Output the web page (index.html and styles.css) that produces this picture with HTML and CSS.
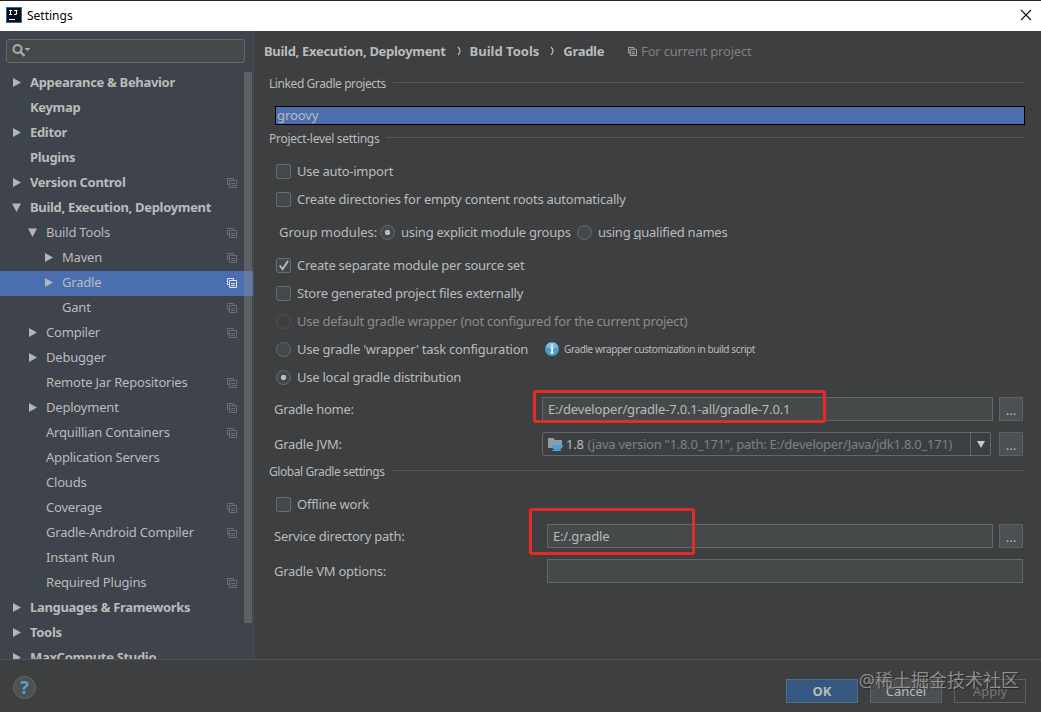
FILE: index.html
```html
<!DOCTYPE html>
<html lang="en">
<head>
  <meta charset="UTF-8" />
  <meta name="viewport" content="width=device-width, initial-scale=1.0" />
  <title>Settings</title>
  <link rel="stylesheet" href="styles.css">
</head>
<body>
  <svg width="0" height="0" style="display: none;">
    <symbol id="copy" viewBox="0 0 10 10">
      <path d="M2.5 6.5H.5V.5h6v2" fill="none" stroke="currentColor" />
      <path d="M2.5 2.5h7v7h-7z" fill="none" stroke="currentColor" />
      <path d="M4 5.5h4M4 7.5h4" fill="none" stroke="currentColor" />
    </symbol>
  </svg>

  <header class="titlebar">
    <svg class="logo" viewBox="0 0 16 16">
      <rect width="16" height="16" fill="#1b6fae" />
      <rect x="1" y="1" width="14" height="14" fill="#0b0f14" />
      <path d="M3 3.5h3M4.5 3.5v4M3 7.5h3M8 3.5h3.5M10.5 3.5v3q0 1-1 1H8M3 12.5h6" fill="none" stroke="#fff" stroke-width="1.1" />
    </svg>
    <span class="title">Settings</span>
    <svg class="close" viewBox="0 0 12 12"><path d="M1 1l10 10M11 1L1 11" stroke="#111" stroke-width="1.1" /></svg>
  </header>

  <main class="main">
    <aside class="sidebar">
      <div class="search">
        <svg width="20" height="14" viewBox="0 0 20 14">
          <circle cx="5.5" cy="5" r="4" fill="none" stroke="#a9adb0" stroke-width="2" />
          <path d="M8.5 8l4 4" stroke="#a9adb0" stroke-width="2.4" />
          <path d="M12.5 4h6l-3 3z" fill="#a9adb0" />
        </svg>
      </div>
      <ul class="tree" id="tree"></ul>
      <div class="scrollbar"></div>
    </aside>

    <section class="content">
      <div class="breadcrumb">
        <span class="crumb">Build, Execution, Deployment</span>
        <svg class="sep" viewBox="0 0 5 10"><path d="M1 1q2 2 2 4t-2 4" /></svg>
        <span class="crumb tools">Build Tools</span>
        <svg class="sep" viewBox="0 0 5 10"><path d="M1 1q2 2 2 4t-2 4" /></svg>
        <span class="crumb">Gradle</span>
        <svg class="copy" viewBox="0 0 10 10"><use href="#copy" /></svg>
        <span class="scope">For current project</span>
      </div>

      <h2 class="group">Linked Gradle projects</h2>
      <div class="projects">groovy</div>

      <h2 class="group second"><span>Project-level settings</span></h2>
      <div class="options">
        <label class="row"><i class="box"></i><span>Use auto-import</span></label>
        <label class="row"><i class="box"></i><span>Create directories for empty content roots automatically</span></label>
        <div class="row modules">
          <span class="caption">Group modules:</span>
          <i class="radio on"></i><span class="first">using explicit module <u>g</u>roups</span>
          <i class="radio"></i><span>using <u>q</u>ualified names</span>
        </div>
        <label class="row"><i class="box"><svg viewBox="0 0 14 14"><path d="M3 7l3 4 6-9" /></svg></i><span>Create separate module per source set</span></label>
        <label class="row"><i class="box"></i><span>Store generated project files externally</span></label>
        <label class="row disabled"><i class="radio"></i><span>Use default gradle wrapper (not configured for the current project)</span></label>
        <div class="row">
          <i class="radio"></i><span class="wrapper">Use gradle 'wrapper' task configuration</span>
          <svg class="info" viewBox="0 0 14 14">
            <circle cx="7" cy="7" r="7" fill="#4c9ccb" />
            <path d="M1 5a6.3 6.3 0 0 1 12 0q-6 3-12 0" fill="#7dbbe0" />
            <path d="M7 2.5v2M5.8 6h1.4v4.5M5.5 10.7h3" fill="none" stroke="#fff" stroke-width="1.7" />
          </svg>
          <span class="hint">Gradle wrapper customization in build script</span>
        </div>
        <label class="row"><i class="radio on"></i><span>Use local gradle distribution</span></label>
      </div>

      <div class="field">
        <span class="name">Gradle home:</span>
        <div class="input"><span>E:/developer/gradle-7.0.1-all/gradle-7.0.1</span></div>
        <button class="more">...</button>
        <div class="mark mark-home"></div>
      </div>
      <div class="field">
        <span class="name">Gradle JVM:</span>
        <div class="select">
          <svg class="folder" viewBox="0 0 16 14">
            <path d="M0 1h5.5l1.5 2h7v8H0z" fill="#8f9b9e" />
            <path d="M4 8h11v2h-1q-1 3-3 3H7q-2 0-3-3z" fill="#3fa3dc" />
            <path d="M4 13.5h9" stroke="#3fa3dc" />
          </svg>
          <span class="version">1.8</span>
          <span class="path">(java version "1.8.0_171", path: E:/developer/Java/jdk1.8.0_171)</span>
          <span class="arrow"><svg viewBox="0 0 8 7"><path d="M0 0h8L4 7z" /></svg></span>
        </div>
        <button class="more">...</button>
      </div>

      <h2 class="group third">Global Gradle settings</h2>
      <div class="options">
        <label class="row"><i class="box"></i><span>Offline work</span></label>
      </div>
      <div class="field wide">
        <span class="name">Service directory path:</span>
        <div class="input"><span class="service">E:/.gradle</span></div>
        <button class="more">...</button>
        <div class="mark mark-service"></div>
      </div>
      <div class="field wide">
        <span class="name">Gradle VM options:</span>
        <div class="input"></div>
      </div>
    </section>
  </main>

  <footer class="footer">
    <button class="help">?</button>
    <div class="buttons">
      <button class="btn primary">OK</button>
      <button class="btn">Cancel</button>
      <button class="btn off">Apply</button>
    </div>
    <span class="watermark">@稀土掘金技术社区</span>
  </footer>

  <script>
    // name, level, arrow, project icon
    const items = [
      ["Appearance & Behavior", 0, "right", false],
      ["Keymap", 0, "", false],
      ["Editor", 0, "right", false],
      ["Plugins", 0, "", false],
      ["Version Control", 0, "right", true],
      ["Build, Execution, Deployment", 0, "down", false],
      ["Build Tools", 1, "down", true],
      ["Maven", 2, "right", true],
      ["Gradle", 2, "right", true],
      ["Gant", 2, "", true],
      ["Compiler", 1, "right", true],
      ["Debugger", 1, "right", false],
      ["Remote Jar Repositories", 1, "", true],
      ["Deployment", 1, "right", true],
      ["Arquillian Containers", 1, "", true],
      ["Application Servers", 1, "", false],
      ["Clouds", 1, "", false],
      ["Coverage", 1, "", true],
      ["Gradle-Android Compiler", 1, "", true],
      ["Instant Run", 1, "", false],
      ["Required Plugins", 1, "", true],
      ["Languages & Frameworks", 0, "right", false],
      ["Tools", 0, "right", false],
      ["MaxCompute Studio", 0, "right", false]
    ];
    const arrows = { right: "M1 0l8 4.5L1 9z", down: "M0 .5h9L4.5 9z" };

    document.getElementById("tree").innerHTML = items.map(([name, level, arrow, icon]) => `
      <li class="node level${level}${name === "Gradle" ? " selected" : ""}">
        <svg class="twisty" viewBox="0 0 9 9"><path d="${arrows[arrow] || ""}" /></svg>
        <span class="label">${name.replace("&", "&amp;")}</span>
        ${icon ? '<svg class="copy" viewBox="0 0 10 10"><use href="#copy" /></svg>' : ""}
      </li>`).join("");
  </script>
</body>
</html>
```
FILE: styles.css
```css
* {
  box-sizing: border-box;
}

body {
  margin: 0;
  width: 1041px;
  height: 712px;
  overflow: hidden;
  display: flex;
  flex-direction: column;
  background: #3d3f41;
  color: #bbbbbb;
  font: 13px/18px "Noto Sans", "Noto Sans CJK SC", sans-serif;
  letter-spacing: -0.25px;
  white-space: nowrap;
}

button {
  font: inherit;
  letter-spacing: 0;
  color: inherit;
  padding: 0;
}

/* title bar */
.titlebar {
  height: 31px;
  flex: none;
  display: flex;
  align-items: center;
  padding: 0 9px 0 6px;
  background: #fff;
  border-top: 1px solid #2b2626;
  color: #000;
}

.logo {
  width: 16px;
  height: 16px;
  margin-bottom: 2px;
}

.title {
  margin-left: 5px;
  font-size: 12px;
  letter-spacing: 0;
}

.close {
  width: 12px;
  height: 12px;
  margin: 0 0 2px auto;
}

.main {
  flex: 1;
  min-height: 0;
  display: flex;
}

/* left tree */
.sidebar {
  position: relative;
  width: 254px;
  flex: none;
  overflow: hidden;
  background: #3e434c;
  border-right: 1px solid #4b4f52;
}

.search {
  height: 24px;
  width: 239px;
  margin: 8px 0 8px 6px;
  padding: 4px 5px;
  border: 1px solid #646a6c;
  border-radius: 3px;
  background: #45494a;
}

.search svg {
  display: block;
}

.tree {
  margin: 0;
  padding: 0;
  list-style: none;
  letter-spacing: -0.2px;
}

.node {
  height: 25px;
  display: flex;
  align-items: center;
  padding: 0 16px 2px 12px;
}

.level1 { padding-left: 28px; }
.level2 { padding-left: 44px; }

.label {
  padding-bottom: 2px;
}

.level0 .label {
  font-weight: bold;
  letter-spacing: -0.32px;
}

.twisty {
  width: 9px;
  height: 9px;
  margin-right: 9px;
  fill: #b2b5b9;
}

.copy {
  width: 10px;
  height: 10px;
  color: #6a6f76;
}

.node .copy {
  margin-left: auto;
}

.selected {
  background: #4b6eaf;
}

.selected .copy {
  color: #dfe5f0;
}

.scrollbar {
  position: absolute;
  top: 41px;
  right: 1px;
  width: 8px;
  height: 551px;
  background: rgba(140, 140, 140, 0.4);
}

/* right side */
.content {
  flex: 1;
  padding: 10px 17px 0 15px;
}

.breadcrumb {
  height: 20px;
  display: flex;
  align-items: center;
  margin: 0 0 13px -5px;
  font-weight: bold;
  letter-spacing: -0.3px;
}

.tools {
  letter-spacing: 0;
}

.sep {
  width: 5px;
  height: 10px;
  margin: 0 8px 0 11px;
  fill: none;
  stroke: #bbb;
  stroke-width: 1.2;
}

.breadcrumb .copy {
  width: 9px;
  height: 9px;
  margin: 0 4px 0 24px;
  color: #b0b3b5;
}

.scope {
  color: #808080;
  font-weight: normal;
  letter-spacing: -0.2px;
}

.group {
  height: 20px;
  margin: 0;
  display: flex;
  align-items: center;
  font-size: 12px;
  font-weight: normal;
  letter-spacing: -0.42px;
}

.group::after {
  content: "";
  flex: 1;
  height: 1px;
  margin: -3px 0 0 7px;
  background: #55595b;
}

.projects {
  height: 19px;
  margin: 12px -1px 4px 6px;
  padding-left: 1px;
  border: 1px solid #000;
  background: #4b6eaf;
  letter-spacing: -0.1px;
  line-height: 17px;
}

.second {
  letter-spacing: -0.28px;
}

.second,
.third {
  margin-bottom: 8px;
}

.third {
  margin-top: -5px;
}

.options {
  padding-bottom: 1px;
}

.row {
  height: 28px;
  display: flex;
  align-items: center;
  padding-left: 7px;
}

.box,
.radio {
  width: 15px;
  height: 15px;
  flex: none;
  margin-right: 6px;
  border: 1px solid #666b6c;
  background: #43494a;
}

.box {
  border-radius: 2px;
}

.box svg {
  display: block;
  width: 13px;
  height: 13px;
  fill: none;
  stroke: #bbb;
  stroke-width: 2;
}

.radio {
  border-radius: 50%;
}

.radio.on {
  background: radial-gradient(circle, #bbb 2.3px, #43494a 3px);
}

.modules {
  margin: 5px 0;
  padding-left: 10px;
}

.modules .caption {
  width: 101px;
  letter-spacing: 0;
}

.modules .first {
  width: 176px;
}

.disabled {
  color: #8c8c8c;
}

.disabled .radio {
  border-color: #505455;
  background: none;
}

.wrapper {
  width: 248px;
}

.info {
  width: 14px;
  height: 14px;
  margin-right: 5px;
}

.hint {
  font-size: 10px;
  letter-spacing: -0.39px;
}

.field {
  position: relative;
  height: 24px;
  display: flex;
  align-items: center;
  margin: 5px 1px 11px 5px;
}

.name {
  width: 268px;
  padding-bottom: 1px;
}

.wide .name {
  width: 273px;
}

.input,
.select {
  flex: 1;
  height: 24px;
  display: flex;
  align-items: center;
  padding: 0 0 1px 5px;
  border: 1px solid #646869;
  background: #45494a;
}

.input {
  letter-spacing: -0.17px;
}

.select {
  margin-right: 2px;
  padding-bottom: 0;
  border-radius: 2px;
  background: #3c3f41;
}

.folder {
  width: 16px;
  height: 14px;
  margin-right: 2px;
}

.version,
.path {
  padding-bottom: 1px;
}

.path {
  margin-left: 4px;
  color: #808080;
}

.arrow {
  width: 20px;
  height: 22px;
  margin-left: auto;
  display: flex;
  align-items: center;
  justify-content: center;
  border-left: 1px solid #646869;
}

.arrow svg {
  width: 8px;
  height: 7px;
  fill: #c8c8c8;
}

.more {
  width: 24px;
  height: 24px;
  margin-left: 6px;
  padding-top: 2px;
  border: 1px solid #5e6263;
  background: #4c5052;
}

/* red marks over the paths */
.mark {
  position: absolute;
  border: 3px solid #e82a24;
  border-radius: 3px;
}

.mark-home {
  left: 259px;
  top: -7px;
  width: 293px;
  height: 33px;
}

.mark-service {
  left: 255px;
  top: -16px;
  width: 166px;
  height: 47px;
}

/* bottom bar */
.footer {
  position: relative;
  height: 53px;
  flex: none;
  display: flex;
  align-items: center;
  justify-content: space-between;
  padding: 2px 15px 0 13px;
  border-top: 1px solid #515456;
}

.help {
  width: 23px;
  height: 23px;
  border: 1px solid #63686a;
  border-radius: 50%;
  background: #4c5153;
  color: #58a0d0;
  font-size: 18px;
  font-weight: bold;
  line-height: 20px;
}

.buttons {
  display: flex;
  gap: 12px;
  padding-top: 8px;
}

.btn {
  width: 72px;
  height: 24px;
  border: 1px solid #5e6264;
  background: #4c5052;
}

.primary {
  border-color: #4c708c;
  background: #365880;
  font-weight: bold;
}

.off {
  background: none;
  color: #777;
}

.watermark {
  position: absolute;
  right: 22px;
  top: 8px;
  font-size: 18px;
  letter-spacing: 0;
  line-height: 24px;
  color: rgba(200, 200, 200, 0.6);
  text-shadow: 1px 1px 1px rgba(0, 0, 0, 0.4);
}
```
